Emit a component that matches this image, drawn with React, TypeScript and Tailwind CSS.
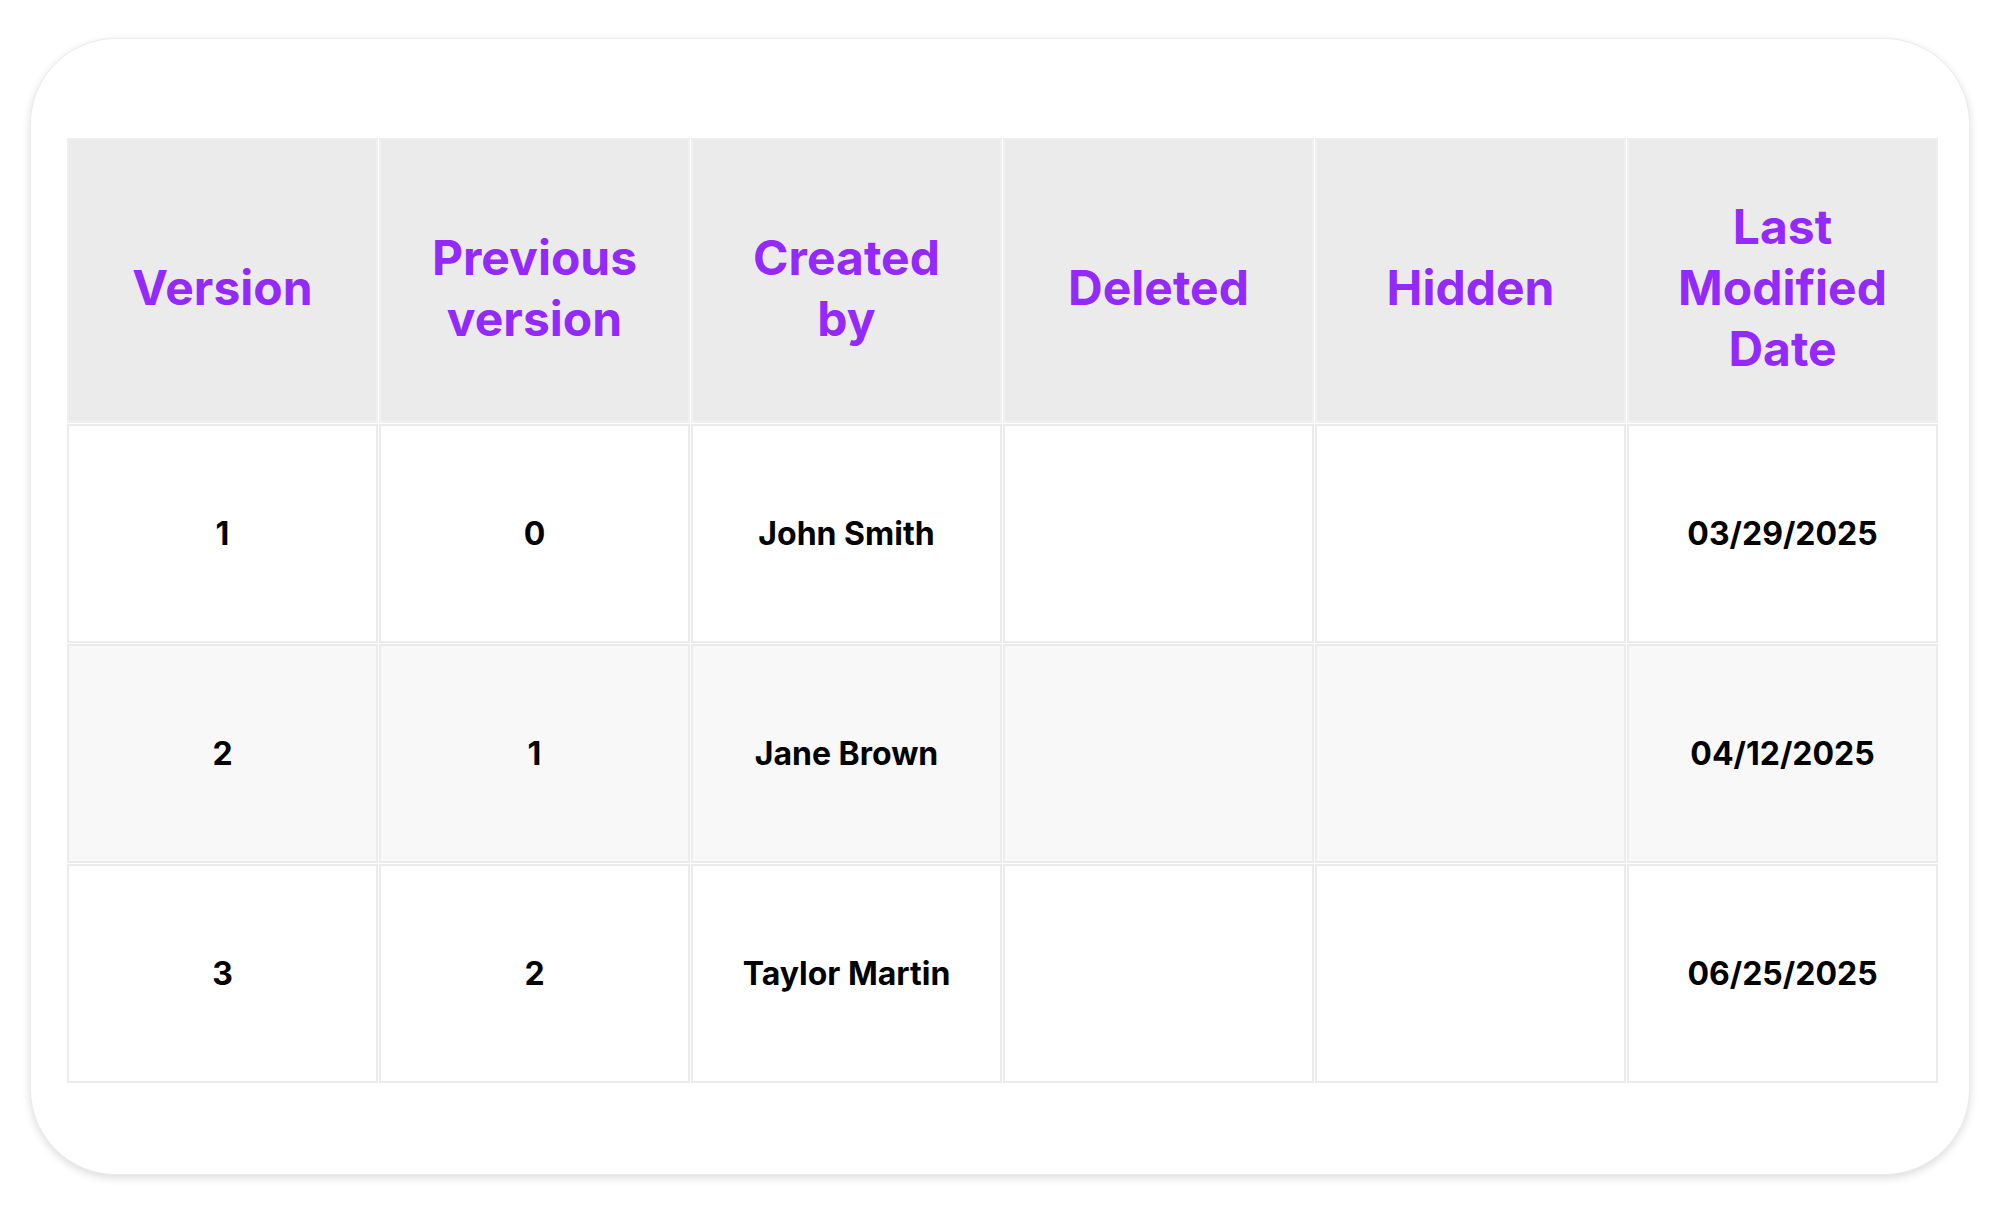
const columns = ['Version', 'Previous version', 'Created by', 'Deleted', 'Hidden', 'Last Modified Date']

const headers: string[][] = [
  ['Version'],
  ['Previous', 'version'],
  ['Created', 'by'],
  ['Deleted'],
  ['Hidden'],
  ['Last', 'Modified', 'Date'],
]

const rows = [
  { version: '1', previous: '0', createdBy: 'John Smith', deleted: '', hidden: '', modified: '03/29/2025' },
  { version: '2', previous: '1', createdBy: 'Jane Brown', deleted: '', hidden: '', modified: '04/12/2025' },
  { version: '3', previous: '2', createdBy: 'Taylor Martin', deleted: '', hidden: '', modified: '06/25/2025' },
]

export default function App() {
  return (
    <div className="flex h-[1206px] w-[2000px] bg-white pl-[30px] pr-[30px] pt-[38px] pb-[31px] font-['Inter','Noto_Sans',sans-serif]">
      <div className="flex-1 rounded-[86px] border border-[#ececec] bg-white pl-[36px] pr-[31px] pt-[99px] shadow-[0_3px_8px_rgba(0,0,0,0.14)]">
        <div className="grid grid-cols-6 gap-px" aria-label={columns.join(', ')}>
          {headers.map((lines, i) => (
            <div
              key={i}
              className="flex h-[285px] flex-col items-center justify-center border-2 border-[#efefef] bg-[#ebebeb] pt-[14px] text-center text-[48px] font-bold leading-[61px] text-[#9429fb]"
            >
              {lines.map((l) => (
                <span key={l}>{l}</span>
              ))}
            </div>
          ))}
          {rows.map((r, ri) =>
            [r.version, r.previous, r.createdBy, r.deleted, r.hidden, r.modified].map((v, ci) => (
              <div
                key={ri + '-' + ci}
                className={
                  'flex h-[219px] items-center justify-center border-2 border-[#ebebeb] text-[32px] font-bold text-black ' +
                  (ri === 1 ? 'bg-[#f8f8f8]' : 'bg-white')
                }
              >
                {v}
              </div>
            ))
          )}
        </div>
      </div>
    </div>
  )
}
